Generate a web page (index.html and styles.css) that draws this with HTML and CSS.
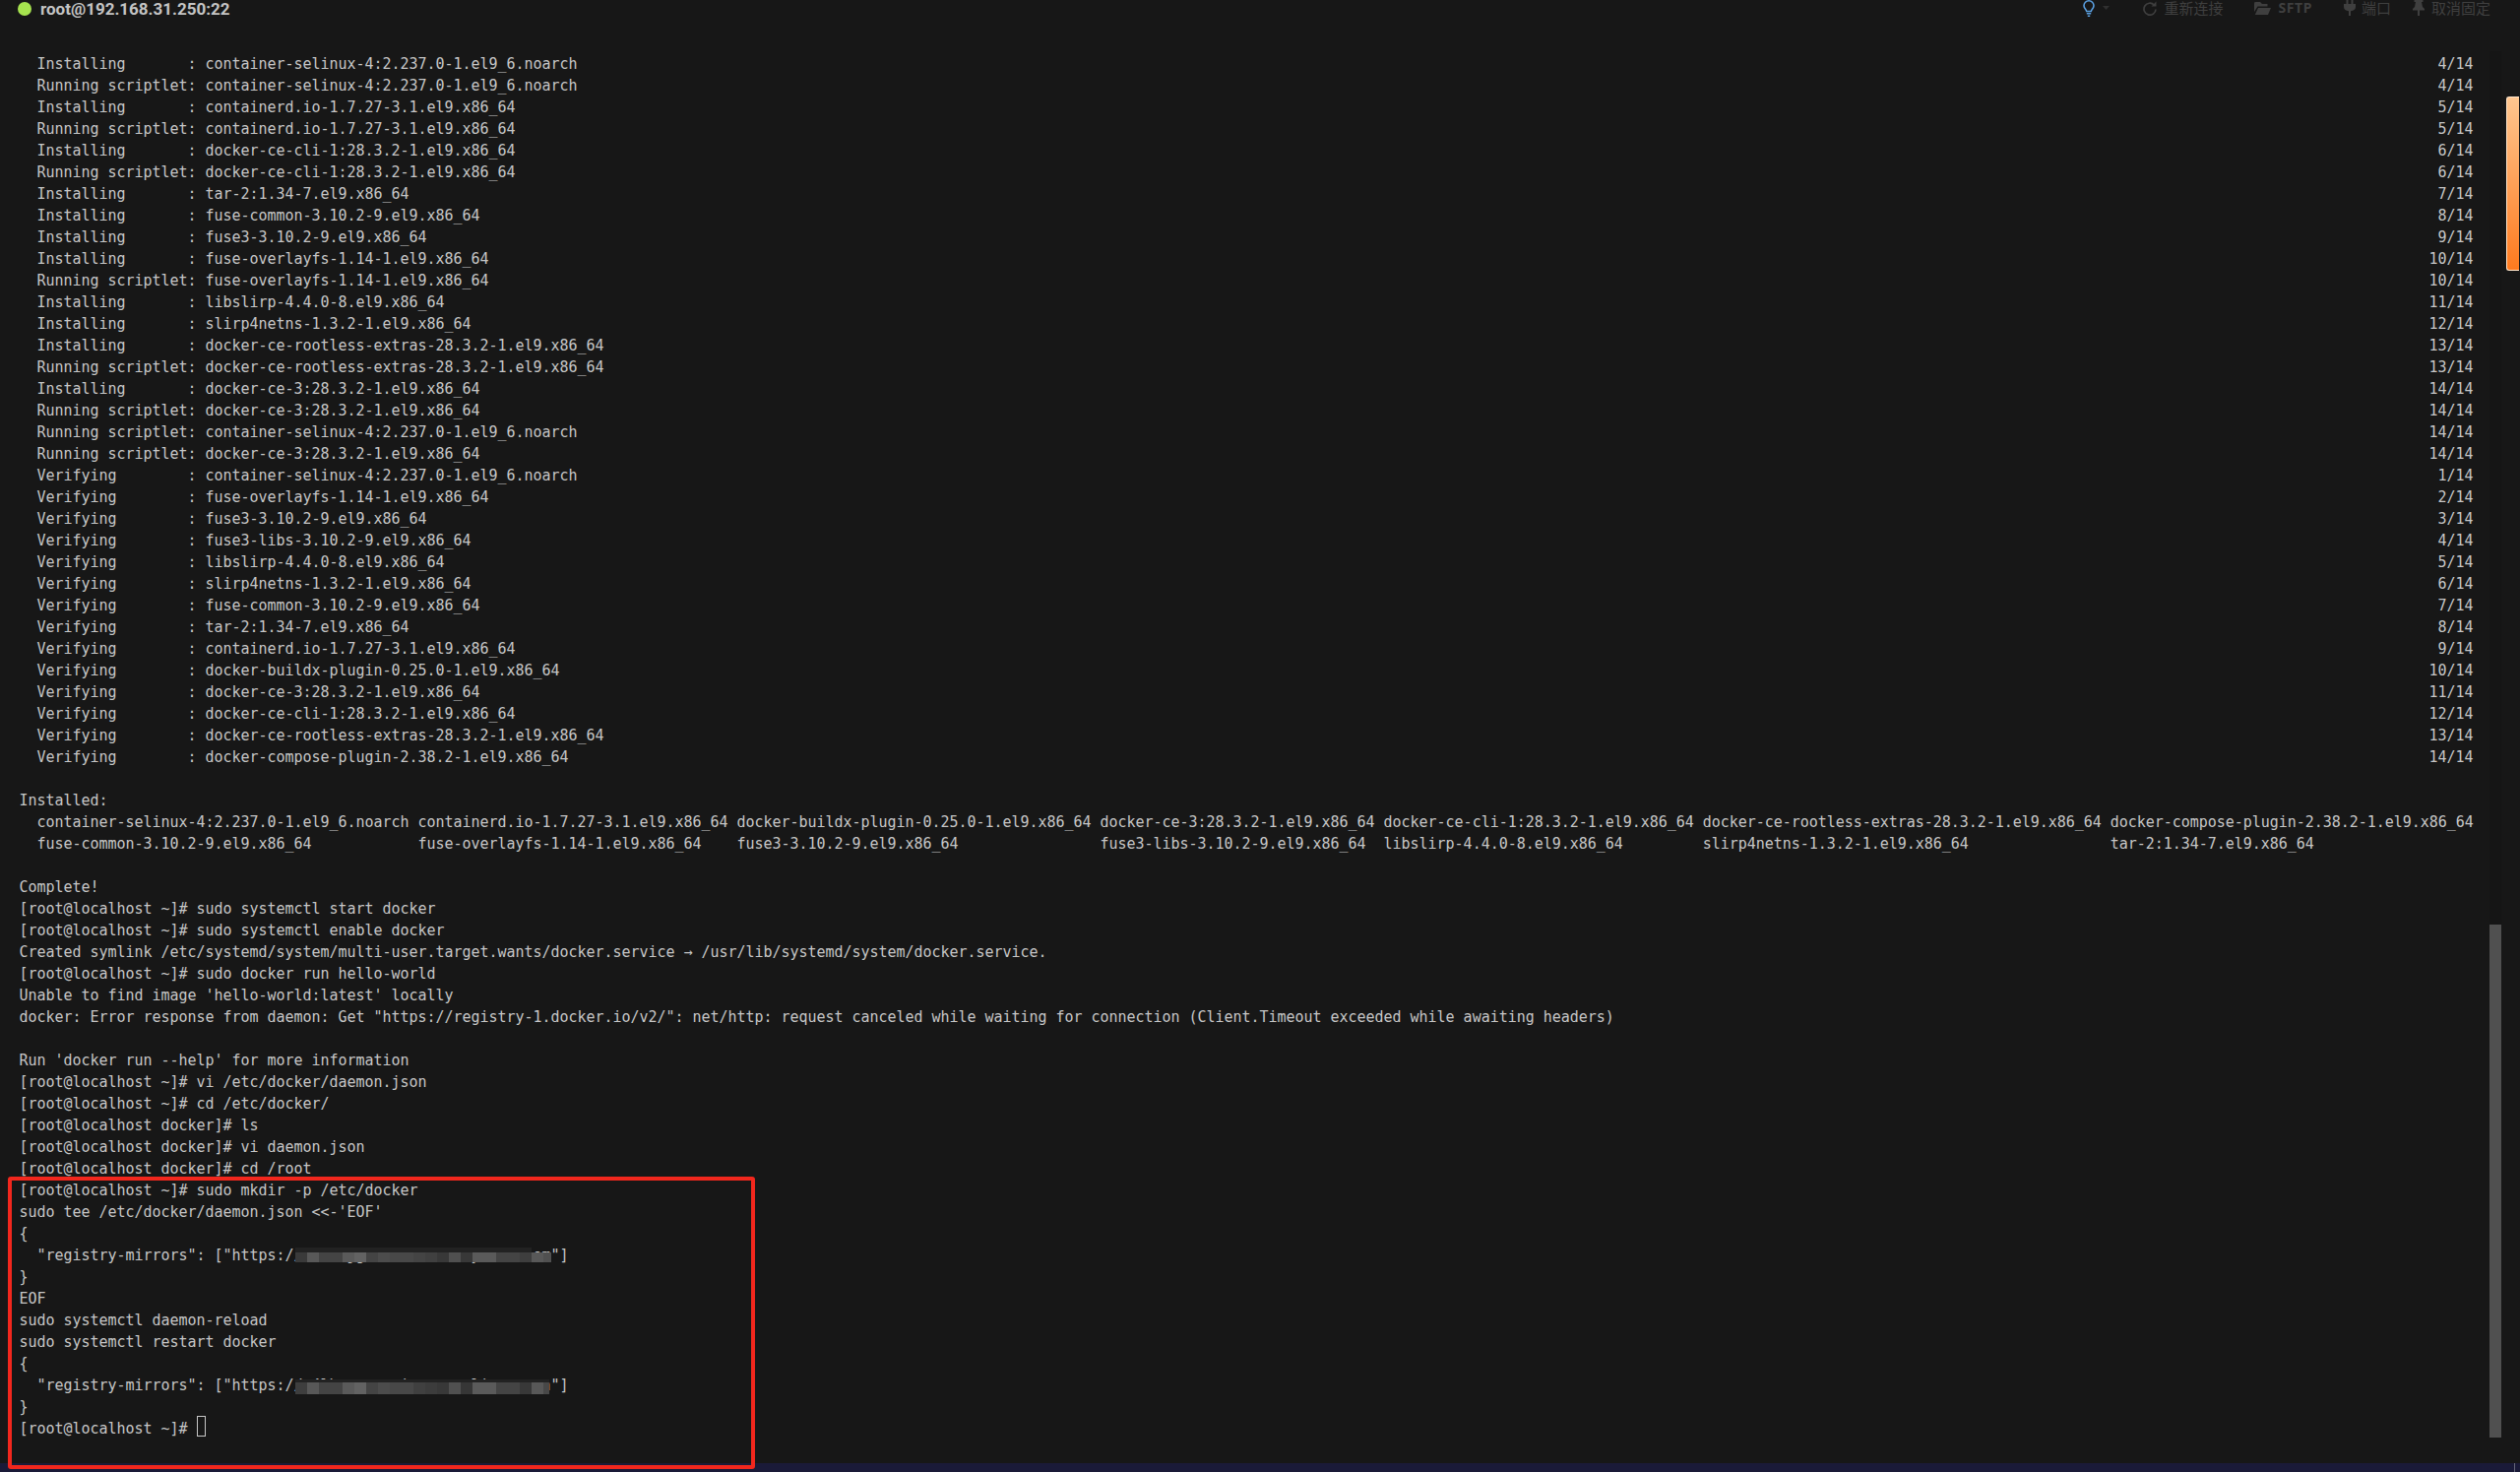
FILE: index.html
```html
<!DOCTYPE html>
<html lang="zh-CN">
<head>
<meta charset="utf-8">
<title>root@192.168.31.250:22</title>
<link rel="stylesheet" href="styles.css">
</head>
<body>
<div class="window">
  <header class="topbar">
    <div class="session"><span class="status-dot"></span><span class="session-name">root@192.168.31.250:22</span></div>
    <nav class="actions">
      <svg class="icon bulb" width="12" height="17" viewBox="0 0 12 17"><path d="M3.7 11.5C3.4 9.6 1 8.600 1 5.800A5 5 0 0 1 11 5.800C11 8.600 8.600 9.600 8.300 11.500Z" fill="none" stroke="currentColor" stroke-width="1.600"/><path d="M3.800 13h4.400v1.600H3.800zM4.800 15.400h2.400V17H4.800z" fill="currentColor"/></svg>
      <svg class="icon caret" width="7" height="4" viewBox="0 0 7 4"><path d="M0 0h7L3.500 4z" fill="currentColor"/></svg>
      <div class="action reconnect"><svg class="icon" width="14" height="15" viewBox="0 0 14 15"><path d="M11.300 4A6 6 0 1 0 13 8.500" fill="none" stroke="currentColor" stroke-width="1.700"/><path d="M13.500 .5v5h-5z" fill="currentColor"/></svg><span>重新连接</span></div>
      <div class="action sftp"><svg class="icon" width="17" height="14" viewBox="0 0 17 14"><path d="M0 2.500A1.500 1.500 0 0 1 1.500 1H6l2 2h5.500v2.500H3.500L0 11z" fill="currentColor"/><path d="M4 7h13l-3 7H.8z" fill="currentColor"/></svg><span class="sftp-label">SFTP</span></div>
      <div class="action port"><svg class="icon" width="12" height="16" viewBox="0 0 12 16"><path d="M2.500 0H4.500V4H7.500V0H9.500V4H12V7C12 9.500 10 11 7 11.300V16H5V11.300C2 11 0 9.500 0 7V4H2.500Z" fill="currentColor"/></svg><span>端口</span></div>
      <div class="action unpin"><svg class="icon" width="12" height="16" viewBox="0 0 12 16"><path d="M1.500 0h9v2H9l1 5 2 2v1.500H7V16H5v-5.500H0V9l2-2 1-5H1.500z" fill="currentColor"/></svg><span>取消固定</span></div>
    </nav>
  </header>
  <main class="terminal">
    <div class="output">
      <div class="row"><span>  Installing       : container-selinux-4:2.237.0-1.el9_6.noarch</span><span>4/14</span></div>
      <div class="row"><span>  Running scriptlet: container-selinux-4:2.237.0-1.el9_6.noarch</span><span>4/14</span></div>
      <div class="row"><span>  Installing       : containerd.io-1.7.27-3.1.el9.x86_64</span><span>5/14</span></div>
      <div class="row"><span>  Running scriptlet: containerd.io-1.7.27-3.1.el9.x86_64</span><span>5/14</span></div>
      <div class="row"><span>  Installing       : docker-ce-cli-1:28.3.2-1.el9.x86_64</span><span>6/14</span></div>
      <div class="row"><span>  Running scriptlet: docker-ce-cli-1:28.3.2-1.el9.x86_64</span><span>6/14</span></div>
      <div class="row"><span>  Installing       : tar-2:1.34-7.el9.x86_64</span><span>7/14</span></div>
      <div class="row"><span>  Installing       : fuse-common-3.10.2-9.el9.x86_64</span><span>8/14</span></div>
      <div class="row"><span>  Installing       : fuse3-3.10.2-9.el9.x86_64</span><span>9/14</span></div>
      <div class="row"><span>  Installing       : fuse-overlayfs-1.14-1.el9.x86_64</span><span>10/14</span></div>
      <div class="row"><span>  Running scriptlet: fuse-overlayfs-1.14-1.el9.x86_64</span><span>10/14</span></div>
      <div class="row"><span>  Installing       : libslirp-4.4.0-8.el9.x86_64</span><span>11/14</span></div>
      <div class="row"><span>  Installing       : slirp4netns-1.3.2-1.el9.x86_64</span><span>12/14</span></div>
      <div class="row"><span>  Installing       : docker-ce-rootless-extras-28.3.2-1.el9.x86_64</span><span>13/14</span></div>
      <div class="row"><span>  Running scriptlet: docker-ce-rootless-extras-28.3.2-1.el9.x86_64</span><span>13/14</span></div>
      <div class="row"><span>  Installing       : docker-ce-3:28.3.2-1.el9.x86_64</span><span>14/14</span></div>
      <div class="row"><span>  Running scriptlet: docker-ce-3:28.3.2-1.el9.x86_64</span><span>14/14</span></div>
      <div class="row"><span>  Running scriptlet: container-selinux-4:2.237.0-1.el9_6.noarch</span><span>14/14</span></div>
      <div class="row"><span>  Running scriptlet: docker-ce-3:28.3.2-1.el9.x86_64</span><span>14/14</span></div>
      <div class="row"><span>  Verifying        : container-selinux-4:2.237.0-1.el9_6.noarch</span><span>1/14</span></div>
      <div class="row"><span>  Verifying        : fuse-overlayfs-1.14-1.el9.x86_64</span><span>2/14</span></div>
      <div class="row"><span>  Verifying        : fuse3-3.10.2-9.el9.x86_64</span><span>3/14</span></div>
      <div class="row"><span>  Verifying        : fuse3-libs-3.10.2-9.el9.x86_64</span><span>4/14</span></div>
      <div class="row"><span>  Verifying        : libslirp-4.4.0-8.el9.x86_64</span><span>5/14</span></div>
      <div class="row"><span>  Verifying        : slirp4netns-1.3.2-1.el9.x86_64</span><span>6/14</span></div>
      <div class="row"><span>  Verifying        : fuse-common-3.10.2-9.el9.x86_64</span><span>7/14</span></div>
      <div class="row"><span>  Verifying        : tar-2:1.34-7.el9.x86_64</span><span>8/14</span></div>
      <div class="row"><span>  Verifying        : containerd.io-1.7.27-3.1.el9.x86_64</span><span>9/14</span></div>
      <div class="row"><span>  Verifying        : docker-buildx-plugin-0.25.0-1.el9.x86_64</span><span>10/14</span></div>
      <div class="row"><span>  Verifying        : docker-ce-3:28.3.2-1.el9.x86_64</span><span>11/14</span></div>
      <div class="row"><span>  Verifying        : docker-ce-cli-1:28.3.2-1.el9.x86_64</span><span>12/14</span></div>
      <div class="row"><span>  Verifying        : docker-ce-rootless-extras-28.3.2-1.el9.x86_64</span><span>13/14</span></div>
      <div class="row"><span>  Verifying        : docker-compose-plugin-2.38.2-1.el9.x86_64</span><span>14/14</span></div>
      <div class="row"></div>
      <div class="row"><span>Installed:</span></div>
      <div class="row"><span>  container-selinux-4:2.237.0-1.el9_6.noarch containerd.io-1.7.27-3.1.el9.x86_64 docker-buildx-plugin-0.25.0-1.el9.x86_64 docker-ce-3:28.3.2-1.el9.x86_64 docker-ce-cli-1:28.3.2-1.el9.x86_64 docker-ce-rootless-extras-28.3.2-1.el9.x86_64 docker-compose-plugin-2.38.2-1.el9.x86_64</span></div>
      <div class="row"><span>  fuse-common-3.10.2-9.el9.x86_64            fuse-overlayfs-1.14-1.el9.x86_64    fuse3-3.10.2-9.el9.x86_64                fuse3-libs-3.10.2-9.el9.x86_64  libslirp-4.4.0-8.el9.x86_64         slirp4netns-1.3.2-1.el9.x86_64                tar-2:1.34-7.el9.x86_64</span></div>
      <div class="row"></div>
      <div class="row"><span>Complete!</span></div>
      <div class="row"><span>[root@localhost ~]# sudo systemctl start docker</span></div>
      <div class="row"><span>[root@localhost ~]# sudo systemctl enable docker</span></div>
      <div class="row"><span>Created symlink /etc/systemd/system/multi-user.target.wants/docker.service → /usr/lib/systemd/system/docker.service.</span></div>
      <div class="row"><span>[root@localhost ~]# sudo docker run hello-world</span></div>
      <div class="row"><span>Unable to find image 'hello-world:latest' locally</span></div>
      <div class="row"><span>docker: Error response from daemon: Get "https://registry-1.docker.io/v2/": net/http: request canceled while waiting for connection (Client.Timeout exceeded while awaiting headers)</span></div>
      <div class="row"></div>
      <div class="row"><span>Run 'docker run --help' for more information</span></div>
      <div class="row"><span>[root@localhost ~]# vi /etc/docker/daemon.json</span></div>
      <div class="row"><span>[root@localhost ~]# cd /etc/docker/</span></div>
      <div class="row"><span>[root@localhost docker]# ls</span></div>
      <div class="row"><span>[root@localhost docker]# vi daemon.json</span></div>
      <div class="row"><span>[root@localhost docker]# cd /root</span></div>
      <div class="row"><span>[root@localhost ~]# sudo mkdir -p /etc/docker</span></div>
      <div class="row"><span>sudo tee /etc/docker/daemon.json &lt;&lt;-'EOF'</span></div>
      <div class="row"><span>{</span></div>
      <div class="row masked"><span>  "registry-mirrors": ["https://aaaaajgaaaaaaaaaaaayaaaaaaom"]</span>
        <svg class="mosaic mosaic-a" width="260" height="15" viewBox="0 0 260 15" shape-rendering="crispEdges"><g fill="#222"><rect x="0" width="240" height="5"/></g><rect y="5" width="12" height="10" fill="#3a3a3a"/><rect x="12" y="5" width="12" height="10" fill="#585858"/><rect x="24" y="5" width="24" height="10" fill="#444"/><rect x="48" y="5" width="12" height="10" fill="#5a5a5a"/><rect x="60" y="5" width="12" height="10" fill="#626262"/><rect x="72" y="5" width="12" height="10" fill="#444"/><rect x="84" y="5" width="12" height="10" fill="#4c4c4c"/><rect x="96" y="5" width="24" height="10" fill="#484848"/><rect x="120" y="5" width="12" height="10" fill="#444"/><rect x="132" y="5" width="12" height="10" fill="#404040"/><rect x="144" y="5" width="12" height="10" fill="#383838"/><rect x="156" y="5" width="12" height="10" fill="#505050"/><rect x="168" y="5" width="12" height="10" fill="#383838"/><rect x="180" y="5" width="24" height="10" fill="#5a5a5a"/><rect x="204" y="5" width="24" height="10" fill="#444"/><rect x="228" y="5" width="12" height="10" fill="#3e3e3e"/><rect x="240" y="5" width="12" height="10" fill="#585858"/><rect x="252" y="5" width="8" height="10" fill="#505050"/></svg>
      </div>
      <div class="row"><span>}</span></div>
      <div class="row"><span>EOF</span></div>
      <div class="row"><span>sudo systemctl daemon-reload</span></div>
      <div class="row"><span>sudo systemctl restart docker</span></div>
      <div class="row"><span>{</span></div>
      <div class="row masked"><span>  "registry-mirrors": ["https://a4lbaaaaaaaiaaaaaaaliaaaaaan"]</span>
        <svg class="mosaic mosaic-b" width="258" height="15" viewBox="0 0 258 15" shape-rendering="crispEdges"><rect y="0" width="258" height="3" fill="#222"/><rect y="3" width="12" height="12" fill="#3e3e3e"/><rect x="12" y="3" width="12" height="12" fill="#585858"/><rect x="24" y="3" width="24" height="12" fill="#444"/><rect x="48" y="3" width="12" height="12" fill="#5a5a5a"/><rect x="60" y="3" width="12" height="12" fill="#626262"/><rect x="72" y="3" width="12" height="12" fill="#444"/><rect x="84" y="3" width="12" height="12" fill="#4c4c4c"/><rect x="96" y="3" width="24" height="12" fill="#484848"/><rect x="120" y="3" width="12" height="12" fill="#404040"/><rect x="132" y="3" width="12" height="12" fill="#3c3c3c"/><rect x="144" y="3" width="12" height="12" fill="#383838"/><rect x="156" y="3" width="12" height="12" fill="#505050"/><rect x="168" y="3" width="12" height="12" fill="#363636"/><rect x="180" y="3" width="24" height="12" fill="#5a5a5a"/><rect x="204" y="3" width="24" height="12" fill="#444"/><rect x="228" y="3" width="12" height="12" fill="#383838"/><rect x="240" y="3" width="12" height="12" fill="#585858"/><rect x="252" y="3" width="6" height="12" fill="#484848"/></svg>
      </div>
      <div class="row"><span>}</span></div>
      <div class="row"><span>[root@localhost ~]# <span class="cursor"></span></span></div>
    </div>
    <div class="scrollbar"><div class="thumb"></div></div>
  </main>
</div>
<footer class="taskbar"><span class="clock">17:36</span><span class="tray-line"></span></footer>
<div class="minimap-marker"></div>
<div class="highlight-box"></div>
</body>
</html>
```
FILE: styles.css
```css
* { box-sizing: border-box; }
html, body { margin: 0; height: 1495px; overflow: hidden; background: #171717; }
body { position: relative; display: flex; flex-direction: column; }

.window { height: 1486px; display: flex; flex-direction: column; }

.topbar {
  height: 52px;
  flex: none;
  display: flex;
  justify-content: space-between;
  align-items: flex-start;
  padding: 0 30px 0 18px;
  overflow: hidden;
}
.session { display: flex; align-items: center; height: 18px; gap: 9px; }
.status-dot { width: 14px; height: 14px; border-radius: 50%; background: #a6e34f; }
.session-name {
  font: bold 17px/18px Roboto, sans-serif;
  color: #c4c4c4;
}

.actions {
  display: flex;
  align-items: center;
  height: 16px;
  color: #3f3f3f;
  font: 15px/16px "Noto Sans CJK SC", "Noto Sans", sans-serif;
}
.icon { display: block; flex: none; }
.bulb { color: #5a9fe0; }
.caret { color: #303030; margin-left: 8px; }
.action { display: flex; align-items: center; gap: 7px; }
.reconnect { margin-left: 34px; }
.sftp { margin-left: 32px; }
.port { margin-left: 32px; gap: 6px; }
.unpin { margin-left: 22px; }
.sftp-label { font: bold 14px/16px "Noto Sans", sans-serif; letter-spacing: .6px; }

.terminal { flex: none; height: 1408px; display: flex; padding-left: 19.500px; }
.output {
  width: 2493px;
  height: 1406px;
  margin: 2px 16.500px 0 0;
  font: 15px/22px "DejaVu Sans Mono", monospace;
  letter-spacing: -0.03px;
  color: #c6c6c6;
}
.row { height: 22px; display: flex; justify-content: space-between; white-space: pre; }
.masked { position: relative; }
.mosaic { position: absolute; }
.mosaic-a { left: 280.500px; top: 3px; }
.mosaic-b { left: 280.500px; top: 5px; }
.cursor {
  display: inline-block;
  width: 9px;
  height: 21px;
  margin-top: -2px;
  vertical-align: top;
  border: 1px solid #c6c6c6;
}

.scrollbar { width: 12px; background: #151515; display: flex; flex-direction: column; justify-content: flex-end; }
.thumb { height: 521px; background: #505050; }

.taskbar {
  flex: 1;
  background: #1a1a38;
  display: flex;
  justify-content: flex-end;
  align-items: flex-start;
  padding-right: 5px;
  overflow: hidden;
}
.clock {
  margin: 3px 88px 0 0;
  font: 15px/20px "Noto Sans", sans-serif;
  color: #fff;
}
.tray-line { width: 1px; height: 9px; background: #667; }

.minimap-marker {
  position: absolute;
  top: 98px;
  right: 1px;
  width: 13px;
  height: 177px;
  border: 1px solid #ffe6cc;
  border-right: 0;
  border-radius: 3px 0 0 3px;
  background: linear-gradient(#ffc68f, #ff7a1f);
}
.highlight-box {
  position: absolute;
  left: 8px;
  top: 1195px;
  width: 759px;
  height: 297px;
  border: 4px solid #f2271d;
  border-radius: 3px;
}
```
